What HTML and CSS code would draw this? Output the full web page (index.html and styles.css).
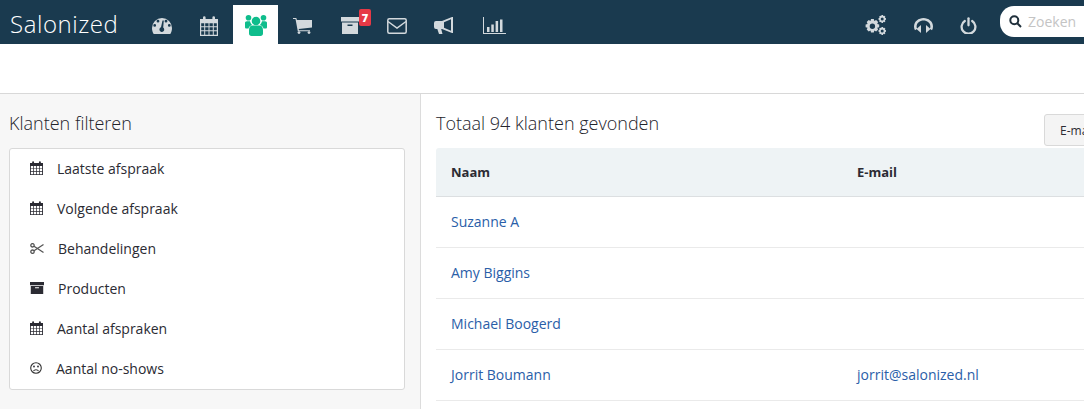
FILE: index.html
```html
<!DOCTYPE html>
<html lang="nl">
<head>
<meta charset="utf-8">
<title>Salonized</title>
<link rel="stylesheet" href="styles.css">
</head>
<body>
<svg class="defs" width="0" height="0" aria-hidden="true">
  <defs>
    <symbol id="cal" viewBox="0 0 18 20" preserveAspectRatio="none">
      <path fill-rule="evenodd" d="M0 3h3V1.500a1.300 1.300 0 0 1 2.600 0V3h6.800V1.500a1.300 1.300 0 0 1 2.600 0V3h3v17H0ZM1.200 7.200v3h3v-3Zm4 0v3h3.300v-3Zm4.300 0v3h3.300v-3Zm4.300 0v3h3v-3ZM1.200 11.200v3h3v-3Zm4 0v3h3.300v-3Zm4.300 0v3h3.300v-3Zm4.300 0v3h3v-3ZM1.200 15.200v3.600h3v-3.600Zm4 0v3.600h3.300v-3.600Zm4.300 0v3.600h3.300v-3.600Zm4.300 0v3.600h3v-3.600Z"/>
    </symbol>
    <symbol id="box" viewBox="0 0 18 17" preserveAspectRatio="none">
      <path fill-rule="evenodd" d="M0 0h18v4.500H0ZM1 5.500h16V17H1ZM6.500 7.500v1.500h5V7.500Z"/>
    </symbol>
  </defs>
</svg>
<header class="topbar">
  <div class="brand">Salonized</div>
  <nav class="nav">
    <a class="nav-item"><svg width="20" height="16" viewBox="0 0 20 16"><path fill-rule="evenodd" d="M10 0a10 10 0 0 1 10 10c0 2.300-.6 4.500-1.700 6H1.700C.6 14.500 0 12.300 0 10A10 10 0 0 1 10 0ZM6 1.800a1.400 1.400 0 1 0 0 2.800 1.400 1.400 0 0 0 0-2.800ZM2.700 6a1.400 1.400 0 1 0 0 2.800 1.400 1.400 0 0 0 0-2.800ZM17.300 6a1.400 1.400 0 1 0 0 2.800 1.400 1.400 0 0 0 0-2.800ZM14 1.800a1.400 1.400 0 1 0 0 2.800 1.400 1.400 0 0 0 0-2.800ZM10.500 2.500 9 9.300a2.400 2.400 0 1 0 2.200.3l.6-7Z"/></svg></a>
    <a class="nav-item"><svg width="18" height="20"><use href="#cal"/></svg></a>
    <a class="nav-item active"><svg width="22" height="21" viewBox="0 0 22 21"><circle cx="11" cy="6" r="4.300"/><circle cx="3.500" cy="2.800" r="2.800"/><circle cx="18.500" cy="2.800" r="2.800"/><path d="M0 8c0-1 .7-1.700 2-1.700h3c.4 1.500 1 2.700 2 3.500-1.700.7-3 2-3.500 3.700H1.500C.5 13.500 0 13 0 12ZM22 8c0-1-.7-1.700-2-1.700h-3c-.4 1.500-1 2.700-2 3.500 1.700.7 3 2 3.500 3.700h2c1 0 1.500-.5 1.500-1.500ZM7.500 10.500h7c2.500 0 3.500 2 3.500 5v3c0 1.500-1 2.500-2.500 2.500h-9C5 21 4 20 4 18.500v-3c0-3 1-5 3.500-5Z"/></svg></a>
    <a class="nav-item"><svg width="19" height="16" viewBox="0 0 19 16"><path d="M0 0h3.300l.6 2H19v7.500L5.700 11l.3 1.300h11v1H4.800L2.500 1.100H0Z"/><circle cx="6" cy="14.600" r="1.400"/><circle cx="16" cy="14.600" r="1.400"/></svg></a>
    <a class="nav-item nav-badged"><svg width="18" height="17"><use href="#box"/></svg><span class="badge">7</span></a>
    <a class="nav-item"><svg width="20" height="16" viewBox="0 0 20 16" class="line"><rect x=".8" y=".8" width="18.400" height="14.400" rx="1.500"/><path d="M1 3.500l9 6.500 9-6.500"/></svg></a>
    <a class="nav-item"><svg width="19" height="17" viewBox="0 0 19 17"><path fill-rule="evenodd" d="M0 6a2 2 0 0 1 2-2h6l10-4h1v16h-1L8 12H7.200l1.300 5H5l-1.700-5H2a2 2 0 0 1-2-2ZM10 5.300v5.400l7 3V2.300Z"/></svg></a>
    <a class="nav-item"><svg width="23" height="17" viewBox="0 0 23 17"><path d="M0 0h1v16h22v1H0ZM4 10h2.500v5H4ZM8.300 7.500h2.500V15H8.300ZM12.600 4h2.500v11h-2.500ZM17 2.500h2.500V15H17Z"/></svg></a>
  </nav>
  <div class="tools">
    <a class="tool"><svg width="22" height="20" viewBox="0 0 22 20"><path fill-rule="evenodd" d="M6 4h2.800l.5 2 1.800-.9 2 2-.9 1.800 2 .5v2.800l-2 .5.900 1.800-2 2-1.800-.9-.5 2H6l-.5-2-1.800.9-2-2 .9-1.800-2-.5V9.400l2-.5-.9-1.800 2-2 1.800.9ZM7.400 8.500a2.700 2.700 0 1 0 0 5.400 2.700 2.700 0 0 0 0-5.400Z"/><path fill-rule="evenodd" d="M16.500 0h1.500l.3 1.100 1.100-.4 1 1-.5 1.100 1.100.4v1.500l-1.100.4.500 1.100-1 1-1.100-.4-.3 1.100h-1.500l-.3-1.100-1.100.4-1-1 .5-1.100-1.100-.4V3.200l1.100-.4-.5-1.100 1-1 1.100.4ZM17.200 2.400a1.500 1.500 0 1 0 0 3 1.500 1.500 0 0 0 0-3Z"/><path fill-rule="evenodd" d="M16.500 12h1.500l.3 1.100 1.100-.4 1 1-.5 1.100 1.100.4v1.500l-1.100.4.500 1.100-1 1-1.100-.4-.3 1.100h-1.500l-.3-1.100-1.100.4-1-1 .5-1.100-1.100-.4v-1.500l1.100-.4-.5-1.100 1-1 1.100.4ZM17.200 14.400a1.500 1.500 0 1 0 0 3 1.500 1.500 0 0 0 0-3Z"/></svg></a>
    <a class="tool"><svg width="19" height="15" viewBox="0 0 19 15"><path d="M9.500 0c5 0 9.500 3.500 9.500 8.500 0 1.500-.3 2.800-1 3.800l-2.200-1.500c.4-.7.600-1.500.6-2.300 0-3.500-3.200-6-6.900-6s-6.900 2.500-6.900 6c0 .8.200 1.600.6 2.300L1 12.300c-.7-1-1-2.300-1-3.800C0 3.500 4.500 0 9.500 0Z"/><path d="M7 7v8l-4.500-4ZM12 7v8l4.500-4Z"/></svg></a>
    <a class="tool"><svg width="17" height="17" viewBox="0 0 17 17" class="power"><path d="M4.800 4a6.900 6.900 0 1 0 7.400 0"/><path d="M8.500 1.300v7"/></svg></a>
  </div>
  <label class="search">
    <svg width="13" height="13" viewBox="0 0 13 13" class="search-icon"><circle cx="5.300" cy="5.300" r="4"/><path d="M8.300 8.300 12 12"/></svg>
    <span class="search-text">Zoeken</span>
  </label>
</header>
<div class="subbar"></div>
<div class="layout">
  <aside class="sidebar">
    <h2 class="title">Klanten filteren</h2>
    <ul class="filters">
      <li class="filter"><svg class="ficon" width="13" height="14"><use href="#cal"/></svg><span class="ftext">Laatste afspraak</span></li>
      <li class="filter"><svg class="ficon" width="13" height="14"><use href="#cal"/></svg><span class="ftext">Volgende afspraak</span></li>
      <li class="filter"><svg class="ficon wide" width="14" height="11" viewBox="0 0 14 11"><g class="scissors"><circle cx="2.500" cy="2.300" r="1.700"/><circle cx="2.500" cy="8.700" r="1.700"/><path d="M4 3.300 13.500 9.500M4 7.700 13.500 1.500"/></g></svg><span class="ftext">Behandelingen</span></li>
      <li class="filter"><svg class="ficon wide" width="14" height="12"><use href="#box"/></svg><span class="ftext">Producten</span></li>
      <li class="filter"><svg class="ficon" width="13" height="14"><use href="#cal"/></svg><span class="ftext">Aantal afspraken</span></li>
      <li class="filter"><svg class="ficon narrow" width="12" height="12" viewBox="0 0 12 12"><g class="frown"><circle cx="6" cy="6" r="5.300"/><path d="M3.500 9C4.500 7.300 7.500 7.300 8.500 9"/></g><circle cx="4" cy="4.500" r=".9"/><circle cx="8" cy="4.500" r=".9"/></svg><span class="ftext">Aantal no-shows</span></li>
    </ul>
  </aside>
  <main class="content">
    <div class="content-head">
      <h2 class="title">Totaal 94 klanten gevonden</h2>
      <button class="btn" type="button">E-mail verzenden</button>
    </div>
    <table class="clients">
      <thead>
        <tr><th class="col-name">Naam</th><th>E-mail</th></tr>
      </thead>
      <tbody>
        <tr><td><a>Suzanne A</a></td><td></td></tr>
        <tr><td><a>Amy Biggins</a></td><td></td></tr>
        <tr><td><a>Michael Boogerd</a></td><td></td></tr>
        <tr><td><a>Jorrit Boumann</a></td><td><a>jorrit@salonized.nl</a></td></tr>
      </tbody>
    </table>
  </main>
</div>
</body>
</html>
```
FILE: styles.css
```css
* { box-sizing: border-box; }
html, body { margin: 0; padding: 0; height: 409px; overflow: hidden; }
body { font-family: "Open Sans", "Liberation Sans", sans-serif; color: #2b2b33; background: #fff; width: 1084px; }
.defs { position: absolute; }
a { color: inherit; text-decoration: none; }

.topbar { height: 44px; background: #1a3a4f; display: flex; align-items: flex-start; }
.brand { width: 138px; padding-left: 10px; font-size: 24px; font-weight: 300; line-height: 48px; height: 44px; color: #fff; letter-spacing: .55px; flex: none; }
.nav { display: flex; align-items: stretch; height: 44px; }
.nav-item { width: 47px; height: 44px; display: flex; align-items: center; justify-content: center; fill: #d3d9dd; position: relative; padding-top: 7px; }
.nav-item.active { width: 45px; margin: 0 1px; background: #fff; fill: #0fbd8c; padding-top: 2px; border-top: 5px solid #1a3a4f; background-clip: padding-box; }
.nav-item:last-child { width: 55px; }
.line { fill: none; stroke: #d3d9dd; stroke-width: 1.500; }
.badge { position: absolute; left: 33px; top: 9px; width: 12px; height: 17px; border-radius: 2px; background: #e63946; color: #fff; font-size: 11px; font-weight: 800; line-height: 17px; text-align: center; }

.tools { margin-left: auto; display: flex; height: 44px; fill: #d3d9dd; }
.tool { width: 45px; height: 44px; display: flex; align-items: center; justify-content: center; padding-top: 6px; }
.tool:first-child { width: 50px; }
.power { fill: none; stroke: #d3d9dd; stroke-width: 2.300; stroke-linecap: round; }
.search { width: 84px; height: 31px; margin: 6px 0 0 9px; background: #fff; border-radius: 14px 0 0 14px; display: flex; align-items: center; padding-left: 9px; gap: 6px; flex: none; }
.search-icon { fill: none; stroke: #20303c; stroke-width: 2; flex: none; }
.search-text { font-size: 14px; color: #c4c4c4; }

.subbar { height: 50px; background: #fff; border-bottom: 1px solid #d8d8d8; }
.layout { display: flex; height: 315px; }
.sidebar { width: 421px; flex: none; background: #f7f7f7; border-right: 1px solid #dcdcdc; padding: 0 15px 0 9px; }
.title { margin: 0; font-size: 18px; font-weight: 300; line-height: 24px; color: #23232b; padding-top: 17px; height: 54px; }
.filters { list-style: none; margin: 0; padding: 0; height: 242px; background: #fff; border: 1px solid #d9d9d9; border-radius: 3px; }
.filter { height: 40px; display: flex; align-items: center; padding: 0 0 2px 20px; font-size: 14px; }
.ficon { flex: none; fill: #2b2b33; margin-right: 14px; }
.scissors { fill: none; stroke: #555; stroke-width: 1.300; }
.frown { fill: none; stroke: #333; stroke-width: 1.100; }

.content { flex: none; width: 800px; padding-left: 15px; }
.content-head { display: flex; height: 54px; position: relative; }
.btn { position: absolute; left: 608px; top: 20px; height: 32px; width: 140px; padding: 0 0 0 15px; text-align: left; background: #f4f4f4; border: 1px solid #d9d9d9; border-radius: 3px; font: 12px "Open Sans", sans-serif; color: #2b2b33; }
.clients { width: 760px; border-collapse: collapse; table-layout: fixed; font-size: 14px; }
.clients th { background: #eef3f5; height: 48px; padding: 0 15px; text-align: left; font-size: 13px; font-weight: 700; border-bottom: 1px solid #dcdfe1; }
.clients th.col-name { width: 406px; border-top-left-radius: 3px; }
.clients td { height: 51px; padding: 0 15px 1px; border-bottom: 1px solid #eaeaea; }
.clients a { color: #2a5ea8; }
```
